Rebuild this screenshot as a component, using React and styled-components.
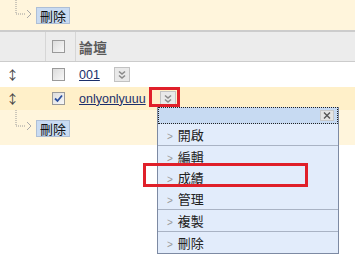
import styled, { createGlobalStyle } from "styled-components";

const GlobalStyle = createGlobalStyle`
  body {
    margin: 0;
    background: #ffffff;
    font-family: "Noto Sans CJK TC", "Liberation Sans", sans-serif;
  }
`;

const Page = styled.div`
  position: relative;
  width: 355px;
  height: 278px;
  overflow: hidden;
  background: #ffffff;
  font-size: 13px;
  color: #222;
`;

const Band = styled.div`
  display: flex;
  align-items: ${(p) => (p.$bottom ? "flex-start" : "center")};
  height: ${(p) => p.$height}px;
  padding-left: 14px;
  padding-top: ${(p) => (p.$bottom ? 10 : 0)}px;
  box-sizing: border-box;
  background: #fff5dc;
`;

const Connector = styled.svg`
  width: 22px;
  flex: none;
  align-self: flex-start;
  margin-top: ${(p) => p.$top}px;
`;

const SmallButton = styled.button`
  height: 17px;
  padding: 0 3px;
  margin: 0;
  border: 1px solid #aebfd6;
  background: #c9dbf2;
  font-family: inherit;
  font-size: 13px;
  line-height: 15px;
  color: #111;
`;

const Grid = styled.div`
  display: grid;
  grid-template-columns: 46px 30px 1fr;
  align-items: center;
`;

const HeaderRow = styled(Grid)`
  height: 29px;
  background: #ececec;
  border-top: 2px solid #cccccc;
  border-bottom: 1px solid #cccccc;
`;

const Row = styled(Grid)`
  height: ${(p) => p.$height}px;
  background: ${(p) => (p.$selected ? "#fff0c9" : "#ffffff")};
`;

const Cell = styled.div`
  display: flex;
  align-items: center;
  height: 100%;
  box-sizing: border-box;
  border-right: ${(p) => (p.$divider ? "1px solid #d6d6d6" : "none")};
  padding-left: ${(p) => p.$pad || 0}px;
  gap: 14px;
`;

const HeaderTitle = styled.span`
  font-weight: bold;
  font-size: 14px;
  color: #5a5a5a;
  padding-left: 3px;
`;

const Box = styled.span`
  display: inline-flex;
  align-items: center;
  justify-content: center;
  width: 11px;
  height: 11px;
  border: 1px solid #9a9a9a;
  background: linear-gradient(135deg, #dcdcdc, #f8f8f8);
  margin-left: 6px;
`;

const Link = styled.a`
  color: #1b2f6b;
  text-decoration: underline;
  font-family: "Liberation Sans", sans-serif;
  font-size: 12.5px;
  padding-left: 3px;
`;

const DropButton = styled.span`
  display: inline-flex;
  align-items: center;
  justify-content: center;
  width: 14px;
  height: 13px;
  border: 1px solid #c2c2c2;
  background: #e9e9e9;
`;

const Drag = styled.span`
  padding-left: 6px;
  color: #444;
  font-size: 13px;
`;

const Menu = styled.div`
  position: absolute;
  left: 157px;
  top: 107px;
  width: 180px;
  border: 1px solid #7d8aa3;
  border-top: none;
  background: #e2ecfb;
`;

const MenuHeader = styled.div`
  display: flex;
  justify-content: flex-end;
  align-items: center;
  height: 15px;
  border: 1px dotted #222;
  background: #c7daf2;
  padding-right: 3px;
`;

const Close = styled.span`
  display: inline-flex;
  align-items: center;
  justify-content: center;
  width: 12px;
  height: 9px;
  background: #e4e4e4;
  border: 1px solid #c8c8c8;
`;

const MenuItem = styled.div`
  display: flex;
  align-items: center;
  gap: 5px;
  height: 21px;
  padding-left: 9px;
  border-bottom: ${(p) => (p.$divider ? "1px solid #a9b3c4" : "none")};
  font-size: 13px;
  color: #222;
`;

const Chevron = styled.span`
  color: #999;
  font-size: 10px;
  font-family: "Liberation Sans", sans-serif;
  padding-top: 3px;
`;

const Highlight = styled.div`
  position: absolute;
  left: ${(p) => p.$x}px;
  top: ${(p) => p.$y}px;
  width: ${(p) => p.$w}px;
  height: ${(p) => p.$h}px;
  border: 3px solid #e0202a;
  box-sizing: border-box;
  pointer-events: none;
`;

const ConnectorIcon = ({ top, length }) => (
  <Connector
    $top={top}
    viewBox={`0 0 22 ${length + 8}`}
    style={{ height: length + 8 }}
  >
    <path
      d={`M2 0 V${length} H12`}
      stroke="#9a9a9a"
      strokeDasharray="1 1"
      fill="none"
    />
    <path
      d={`M13 ${length - 4} L17 ${length} L13 ${length + 4}`}
      stroke="#aaa"
      fill="none"
    />
  </Connector>
);

const Checkbox = ({ checked }) => (
  <Box>
    {checked && (
      <svg width="9" height="9" viewBox="0 0 9 9">
        <path
          d="M1 4.5 L3.5 7 L8 1.5"
          stroke="#2b4f9e"
          strokeWidth="1.8"
          fill="none"
        />
      </svg>
    )}
  </Box>
);

const DoubleChevron = () => (
  <DropButton>
    <svg width="10" height="10" viewBox="0 0 10 10">
      <path
        d="M2 1.5 L5 4 L8 1.5 M2 5.5 L5 8 L8 5.5"
        stroke="#8a8a8a"
        strokeWidth="1.6"
        fill="none"
      />
    </svg>
  </DropButton>
);

const items = [
  { label: "開啟", divider: true },
  { label: "編輯", divider: false },
  { label: "成績", divider: false },
  { label: "管理", divider: true },
  { label: "複製", divider: true },
  { label: "刪除", divider: false },
];

const App = () => {
  return (
    <>
      <GlobalStyle />
      <Page>
        <Band $height={30}>
          <ConnectorIcon top={0} length={14} />
          <SmallButton>刪除</SmallButton>
        </Band>

        <HeaderRow>
          <Cell $divider />
          <Cell $divider>
            <Checkbox />
          </Cell>
          <Cell>
            <HeaderTitle>論壇</HeaderTitle>
          </Cell>
        </HeaderRow>

        <Row $height={25}>
          <Cell>
            <Drag>↕</Drag>
          </Cell>
          <Cell>
            <Checkbox />
          </Cell>
          <Cell>
            <Link>001</Link>
            <DoubleChevron />
          </Cell>
        </Row>

        <Row $height={23} $selected>
          <Cell>
            <Drag>↕</Drag>
          </Cell>
          <Cell>
            <Checkbox checked />
          </Cell>
          <Cell>
            <Link>onlyonlyuuu</Link>
            <DoubleChevron />
          </Cell>
        </Row>

        <Band $height={35} $bottom>
          <ConnectorIcon top={-10} length={16} />
          <SmallButton>刪除</SmallButton>
        </Band>

        <Menu>
          <MenuHeader>
            <Close>
              <svg width="8" height="7" viewBox="0 0 8 7">
                <path
                  d="M1 0.5 L7 6.5 M7 0.5 L1 6.5"
                  stroke="#555"
                  strokeWidth="1.4"
                />
              </svg>
            </Close>
          </MenuHeader>
          {items.map((item) => (
            <MenuItem key={item.label} $divider={item.divider}>
              <Chevron>&gt;</Chevron>
              {item.label}
            </MenuItem>
          ))}
        </Menu>

        <Highlight $x={149} $y={87} $w={31} $h={20} />
        <Highlight $x={143} $y={163} $w={165} $h={24} />
      </Page>
    </>
  );
};

export default App;
